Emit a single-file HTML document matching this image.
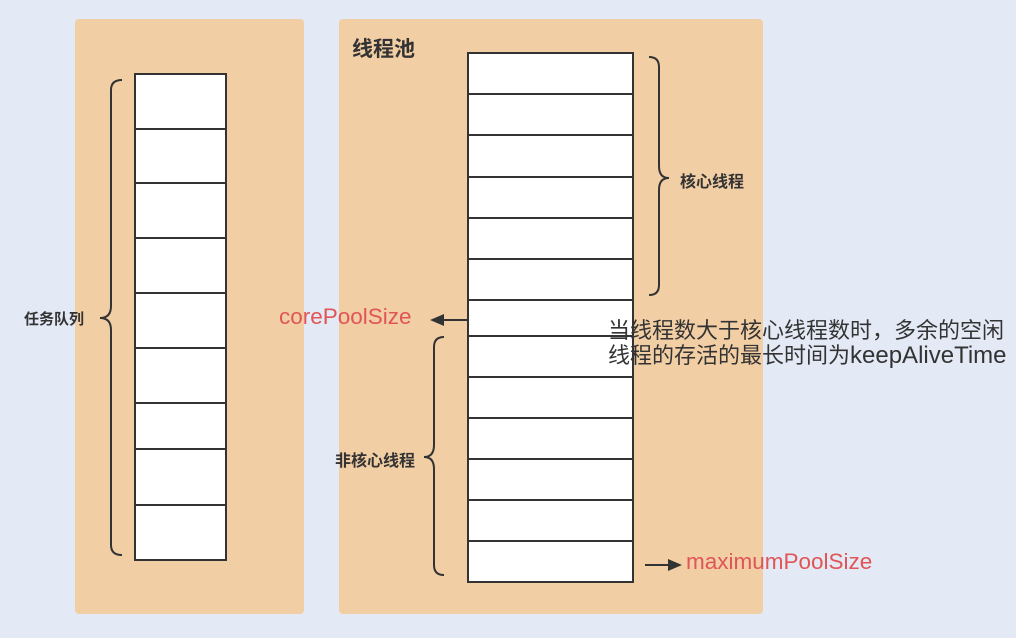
<!DOCTYPE html>
<html><head><meta charset="utf-8"><style>
body{margin:0;width:1016px;height:638px;background:#e3eaf6;position:relative;overflow:hidden;font-family:"Liberation Sans","Noto Sans CJK SC",sans-serif}
.p{position:absolute;background:#f2cea5;border-radius:4px}
.t{position:absolute;white-space:nowrap}
</style></head><body>
<div class="p" style="left:75px;top:19px;width:229px;height:595px"></div>
<div class="p" style="left:339px;top:19px;width:424px;height:595px"></div>
<svg width="1016" height="638" style="position:absolute;left:0;top:0">
<g fill="#fff" stroke="#333" stroke-width="2">
<rect x="135" y="74" width="91" height="486"/>
<rect x="468" y="53" width="165" height="529"/>
</g>
<g stroke="#333" stroke-width="2" fill="none">
<path d="M135 129H226M135 183H226M135 238H226M135 293H226M135 348H226M135 403H226M135 449H226M135 505H226"/>
<path d="M468 94H633M468 135H633M468 177H633M468 218H633M468 259H633M468 300H633M468 336H633M468 377H633M468 418H633M468 459H633M468 500H633M468 541H633"/>
<path d="M122 80Q111 80 111 90V306Q111 318 100 318Q111 318 111 330V545Q111 555 122 555"/>
<path d="M649 57Q659 57 659 67V166Q659 178 669 178Q659 178 659 190V285Q659 295 649 295"/>
<path d="M444 337Q434 337 434 347V445Q434 457 424 457Q434 457 434 469V565Q434 575 444 575"/>
<path d="M468 320H440M645 565H672"/>
</g>
<path d="M430 320L444 314V326Z" fill="#333"/>
<path d="M682 565L668 559V571Z" fill="#333"/>
</svg>
<div class="t" style="left:352px;top:33px;font-size:21px;font-weight:bold;color:#333">线程池</div>
<div class="t" style="left:24px;top:308px;font-size:15px;font-weight:bold;color:#333">任务队列</div>
<div class="t" style="left:680px;top:168px;font-size:16px;font-weight:bold;color:#333">核心线程</div>
<div class="t" style="left:335px;top:447px;font-size:16px;font-weight:bold;color:#333">非核心线程</div>
<div class="t" style="left:279px;top:304px;font-size:22.5px;color:#e05555">corePoolSize</div>
<div class="t" style="left:686px;top:549px;font-size:22.5px;color:#e05555">maximumPoolSize</div>
<div class="t" style="left:608px;top:318px;font-size:22px;color:#333;line-height:25px">当线程数大于核心线程数时，多余的空闲<br>线程的存活的最长时间为<span style="font-size:24px">keepAliveTime</span></div>
</body></html>
